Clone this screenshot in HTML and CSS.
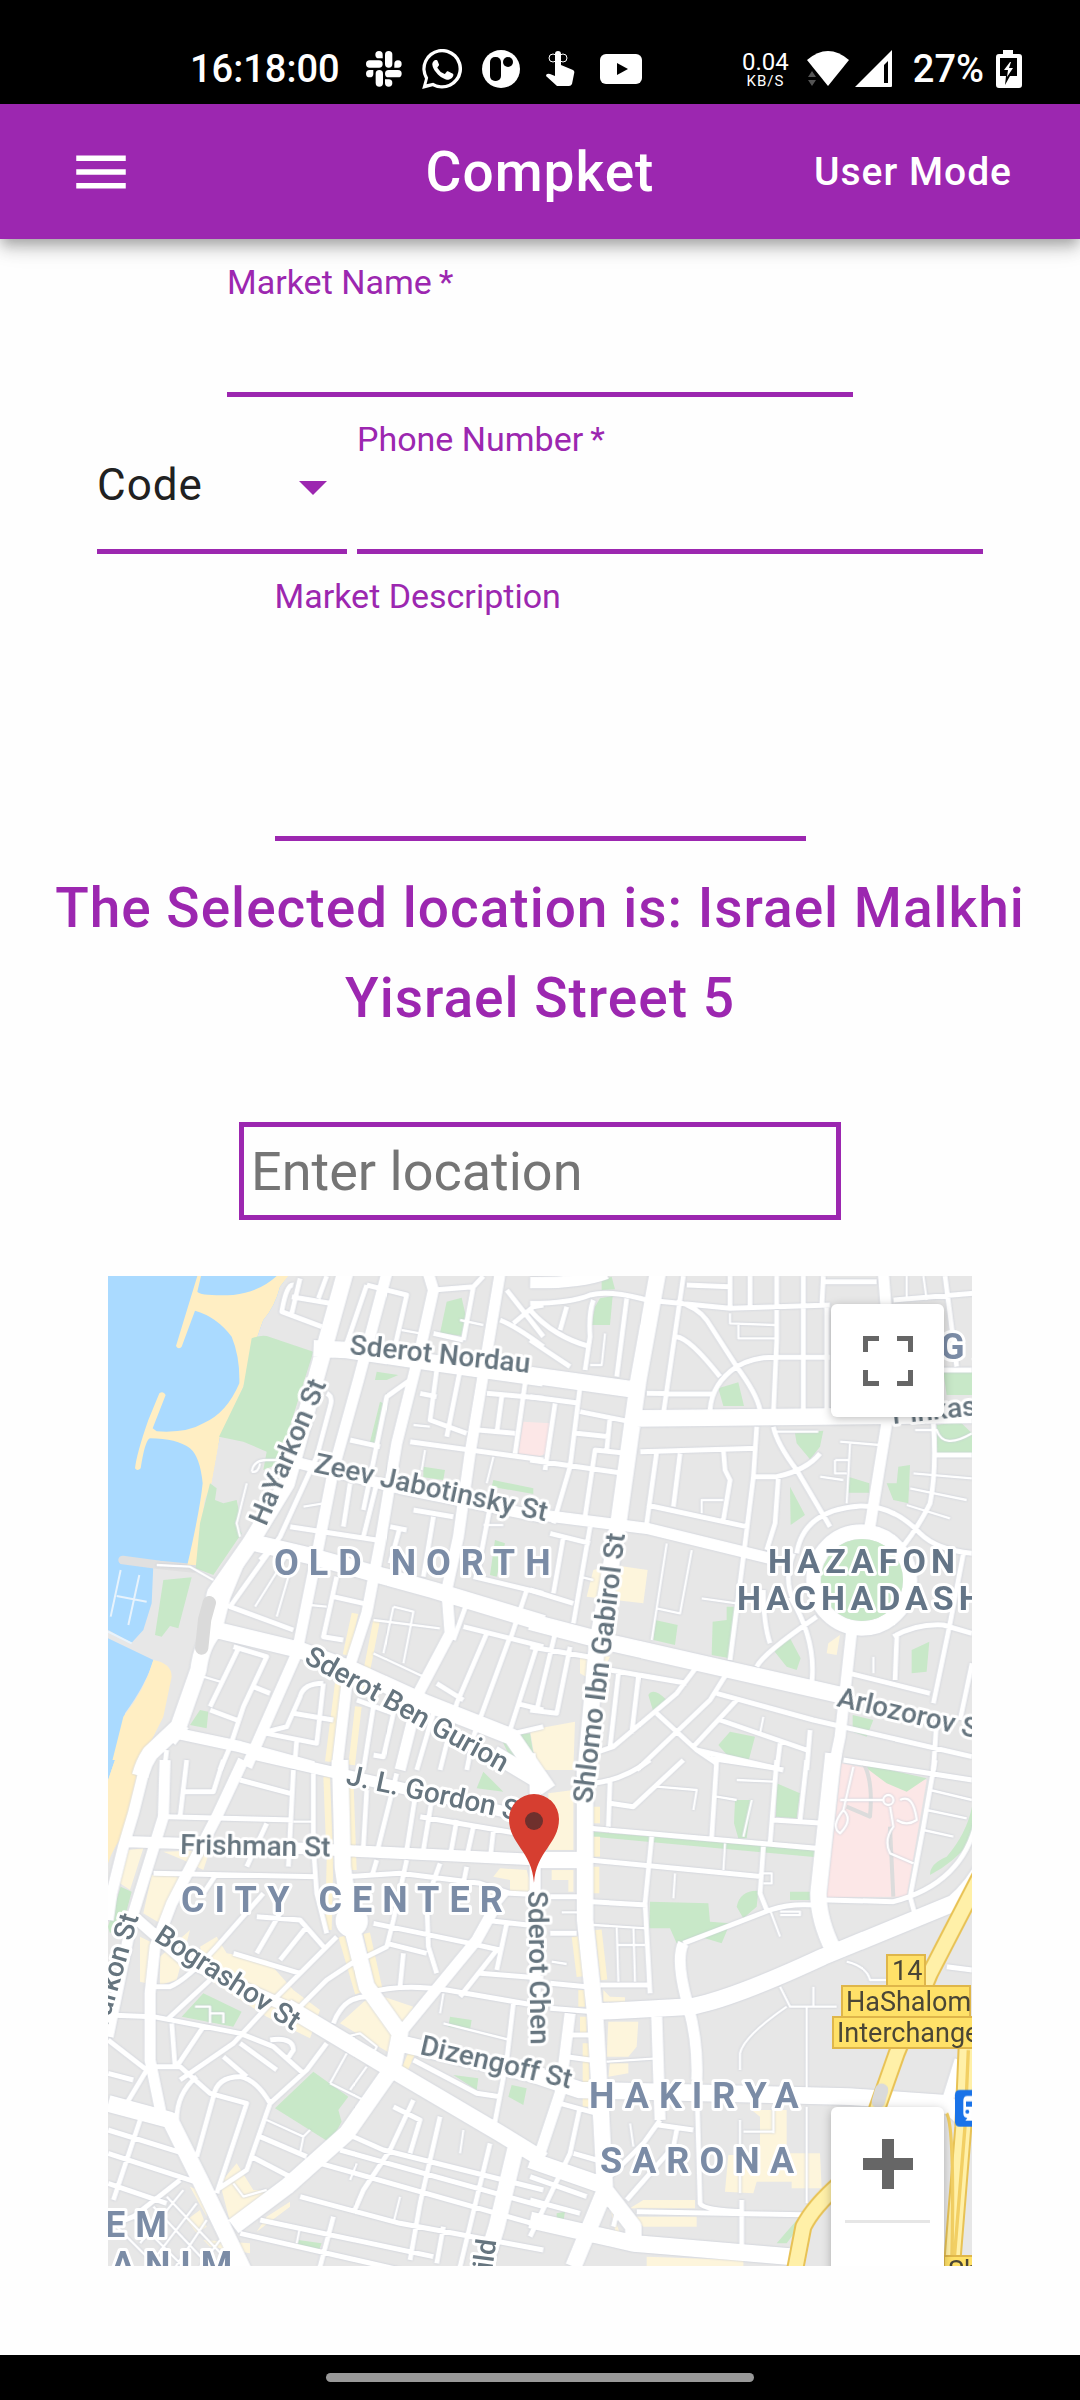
FILE: index.html
```html
<!DOCTYPE html>
<html lang="en">
<head>
    <meta charset="UTF-8">
    <meta name="viewport" content="width=device-width, initial-scale=1.0">
    <title>Compket</title>
    <link rel="stylesheet" href="styles.css">
</head>
<body>

    <!-- Phone status bar -->
    <div class="status-bar">
        <div class="status-group">
            <span class="clock">16:18:00</span>
            <svg width="36" height="36" viewBox="0 0 108 108" fill="#fff">
                <rect x="57" y="0" width="22" height="50" rx="11"/><path d="M50 22H39a11 11 0 1 1 11-11z"/>
                <rect x="0" y="28" width="50" height="22" rx="11"/><path d="M22 57v11a11 11 0 1 1-11-11z"/>
                <rect x="29" y="57" width="22" height="50" rx="11"/><path d="M57 85h11a11 11 0 1 1-11 11z"/>
                <rect x="57" y="57" width="50" height="22" rx="11"/><path d="M85 50V39a11 11 0 1 1 11 11z"/>
            </svg>
            <svg width="40" height="40" viewBox="0 0 24 24" fill="#fff">
                <path d="M.1 24l1.7-6.2a11.9 11.9 0 1 1 4.6 4.5zM6.7 20.2a9.9 9.9 0 1 0-3-3L2.7 21.200z"/>
                <path d="M17.500 14.400c-.3-.1-1.800-.9-2-1s-.5-.1-.7.2-.8 1-.9 1.200-.3.200-.6.100a8 8 0 0 1-4-3.500c-.3-.5.3-.5.9-1.600.1-.2 0-.4 0-.5L9.300 7.100c-.2-.6-.5-.5-.7-.5H8c-.2 0-.5.100-.8.400C6.400 7.800 6.100 8.700 6.200 9.500c.2 1.900 1.400 3.400 1.600 3.700 2.300 3.200 4.700 4.500 7.100 5.200 1.200.3 3.700-.9 3.900-2.700.2-1-.6-1-1.300-1.300z"/>
            </svg>
            <svg width="38" height="38" viewBox="0 0 38 38">
                <circle cx="19" cy="19" r="19" fill="#fff"/>
                <rect x="8" y="7" width="11" height="24" rx="5"/><circle cx="26" cy="12" r="5"/>
            </svg>
            <svg class="hand" width="30" height="36" viewBox="0 0 30 36" fill="#fff">
                <circle cx="8" cy="7" r="4" fill="none" stroke="#fff"/><circle cx="18" cy="7" r="4" fill="none" stroke="#fff"/>
                <path d="M10 3a3 3 0 0 1 6 0v11l12 5q2 1 1 4l-2 10q-1 2-3 2H12L1 25q0-3 4-2l5 2z"/>
            </svg>
            <svg width="42" height="30" viewBox="0 0 42 30">
                <rect width="42" height="30" rx="6" fill="#fff"/><path d="M17 9v12l11-6z"/>
            </svg>
        </div>
        <div class="status-group status-right">
            <span class="speed">0.04<small>KB/S</small></span>
            <svg width="42" height="36" viewBox="0 0 42 36">
                <path d="M0 9q21-18 42 0L21 35z" fill="#fff"/>
                <path d="M1 26l4-6 4 6zM1 29h8l-4 6z" fill="#555"/>
            </svg>
            <svg width="38" height="38" viewBox="0 0 38 38">
                <path d="M0 37L37 0v36q0 1-1 1z" fill="#fff"/><path d="M29 15l4-4v22h-4z"/>
            </svg>
            <span class="percent">27%</span>
            <svg width="26" height="38" viewBox="0 0 26 38">
                <path d="M7 0h10v4h6q3 0 3 3v28q0 3-3 3H3q-3 0-3-3V7q0-3 3-3h4z" fill="#fff"/>
                <path d="M4 8h17v18h-7l-5 9 1-9H4z"/><path d="M14 12l-6 8h4l-1 7 6-9h-4l2-6z" fill="#fff"/>
            </svg>
        </div>
    </div>

    <header class="app-bar">
        <button class="menu-button" aria-label="menu">
            <svg width="66" height="66" viewBox="0 0 24 24" fill="#fff"><path d="M3 18h18v-2H3v2zm0-5h18v-2H3v2zm0-7v2h18V6H3z"/></svg>
        </button>
        <h1>Compket</h1>
        <button class="mode-button">User Mode</button>
    </header>

    <main>
        <form>
            <div class="field">
                <label for="market-name">Market Name&thinsp;*</label>
                <input type="text" id="market-name">
            </div>

            <div class="field-group">
                <div class="field code">
                    <select id="code" aria-label="Code">
                        <option value="">Code</option>
                        <option value="03">03</option>
                        <option value="050">050</option>
                        <option value="052">052</option>
                        <option value="054">054</option>
                    </select>
                </div>
                <div class="field">
                    <label for="phone">Phone Number&thinsp;*</label>
                    <input type="text" id="phone">
                </div>
            </div>

            <div class="field description">
                <label for="description">Market Description</label>
                <textarea id="description"></textarea>
            </div>

            <h2>The Selected location is: Israel Malkhi Yisrael Street 5</h2>

            <input type="text" class="location" placeholder="Enter location" aria-label="Enter location">
        </form>

        <div class="map">
            <svg class="map-canvas" viewBox="0 0 864 990" preserveAspectRatio="xMidYMid slice">
                <!-- geometry is drawn at 3x, in four tiles -->
                <g transform="scale(.33333)">
                    <rect class="land" width="2592" height="2970"/>

                    <!-- areas, north west -->
                    <g transform="translate(-24 -18)">
                        <path class="sea" d="M24 18H560L455 270 310 640 285 885 160 885 155 1000 130 1080 95 1118 24 1080zM24 1105L160 1170Q140 1240 75 1330L65 1400 24 1530z"/>
                        <path class="pier" d="M68 870L180 885 280 895"/>
                        <path class="sand" d="M292 18H303L292 65Q300 78 400 75 480 65 530 18H565L540 50Q525 110 490 150 460 230 455 270L430 350 400 420 360 500 335 640 315 690 300 780 290 885H262Q300 720 308 640 300 560 270 535 230 505 150 505 135 510 122 595 112 605 105 595 110 550 145 450L178 370Q190 362 197 375L158 475 170 484Q260 490 310 460 380 430 418 340 420 260 395 200 350 140 285 122L245 230Q235 240 228 228zM160 1170Q215 1180 215 1220L190 1340 150 1420 120 1500H30L70 1340Q135 1260 160 1170z"/>
                        <path class="land" d="M565 18L540 50Q525 110 490 150 460 230 455 270L430 350 360 500 335 640 315 690 290 885 600 900V18z"/>
                        <path class="park" d="M455 205Q480 195 500 198L640 245 560 500 540 580 490 600 500 545 430 515 357 500 430 350zM330 640L350 655 345 690 370 700 410 690 418 730 405 760 425 790 340 915 287 895 300 760zM190 930L275 922 235 1075 210 1068 185 1100 165 1095zM1040 95L1085 83 1098 140 1085 197 1020 190zM970 590L1035 600 1030 630 970 622zM1180 630L1300 655V672L1175 650zM830 305L895 315 860 330H825zM840 395L850 400 825 520 810 515zM1200 1400L1290 1390 1308 1500 1235 1470zM300 1320L325 1325 320 1375 270 1365zM1185 810L1215 820 1190 920 1170 915z"/>
                        <path class="hospital" d="M1270 455L1350 460 1340 550 1320 558 1255 550z"/>
                        <path class="shops-line" d="M765 1030L738 1155M830 1050L785 1280M720 1200L685 1475M775 1310L755 1485"/>
                        <path class="dock" d="M62 900L32 1040M118 915L85 1065M50 978L140 995M24 1085L95 1120"/>
                    </g>
                    <!-- areas, north east -->
                    <g transform="translate(1266 -18)">
                        <path class="park" d="M215 30L245 20 255 58 215 60zM210 85L248 78 240 165H185L195 110zM565 355L625 337 642 408H580zM795 490L880 482 870 530 840 568 800 520zM780 650L825 735 782 765zM955 620L1018 640V668H952zM1105 590L1140 585 1135 700 1090 690 1070 640 1100 640zM1240 305H1326V375H1250zM1220 465L1290 455 1326 490V550H1220zM375 1050L443 1065 435 1125 370 1110zM548 1055L590 1050V1010H613L600 1165 545 1155zM730 1140L780 1105 812 1165 800 1200 770 1190zM355 1275Q370 1250 410 1290L370 1325zM565 1425L600 1385 675 1400 655 1475 600 1465zM1145 1140L1198 1115 1190 1205 1145 1210zM968 1335L1030 1350 1010 1400 968 1385z"/>
                        <path class="shops" d="M250 885L353 900 340 1000 170 980 190 900zM0 1380L135 1355 130 1500H20zM895 1120L930 1095 920 1155 890 1150zM150 1150L240 1160 200 1240 150 1210z"/>
                    </g>
                    <!-- areas, south west -->
                    <g transform="translate(-24 1452)">
                        <path class="sea" d="M24 0H45L24 60z"/>
                        <path class="sand" d="M45 0H120L75 220Q40 260 24 310V60z"/>
                        <path class="park" d="M62 380L95 395 75 470 30 520 24 500zM245 770L310 700 425 755 400 800zM525 1045L640 935 745 1010 715 1050 725 1085 690 1148zM1050 770L1115 780 1110 810 1045 800zM1150 35L1210 95 1130 85zM1250 0H1310V30zM1060 945L1135 955 1130 990zM1235 975L1280 985 1270 1035 1225 1010zM595 1440L665 1450 655 1475 592 1460z"/>
                        <path class="shops" d="M155 345L250 350 180 490 130 460zM85 270L130 265 90 390 60 370zM120 530L160 550 140 670 120 665zM180 590L270 510 230 660 180 675zM300 560L350 530 380 580 500 600 580 690 660 750 630 835 500 770 330 660zM720 790L820 700 940 740 870 880zM360 1270L410 1210 460 1290 520 1290 390 1385zM270 1280L320 1300V1370zM500 1370L570 1325V1340L470 1415zM260 1380L300 1350 320 1400 290 1420zM1180 350L1200 325 1280 330 1300 400H1230V360zM190 275L330 270 310 330 250 300zM310 1440L450 1450V1480L330 1460z"/>
                        <path class="shops-line" d="M680 50L690 300 685 510M750 50L760 330M725 530L775 700M800 520L838 690M940 870L915 925"/>
                    </g>
                    <!-- areas, south east -->
                    <g transform="translate(1266 1452)">
                        <path class="hospital" d="M935 10L1190 60 1130 410 890 412z"/>
                        <path class="park" d="M360 425L535 430 540 485 600 490 575 550 510 530 440 550 420 505H358zM620 440Q630 390 685 392L680 440 640 475zM190 215L860 272V292L190 230zM780 395H840V420H780zM615 120H665L650 235H625L612 190zM740 70L810 100 800 175 738 170zM990 10L1190 55 1130 95 1070 70zM1326 140V240Q1270 310 1200 345 1200 310 1250 290 1310 220 1326 140zM80 1360L105 1355 100 1385H80zM805 1375L830 1370 770 1450H740z"/>
                        <path class="shops" d="M235 785H325L320 860 295 890H230zM240 910H295V940L235 950zM65 330H130V395H115V360H65zM55 100L130 90V270H55zM665 1050H770V1180H870L875 1285H785V1265H680L670 1300 585 1295 595 1185H690V1070zM340 1320H495V1345H300zM310 1370H500V1400H340zM350 1490L640 1500V1530H350zM220 690L240 710 285 712V725H220zM240 1340L270 1420 260 1430z"/>
                        <path class="shops-line" d="M200 140V190M200 230V290M198 320V400M205 510L222 660M135 530L150 650M155 690V740M160 770V830M168 850V1040"/>
                        <path class="hospital-path" d="M1000 10Q1030 60 1020 170L950 140M1080 200L1090 410"/>
                    </g>

                    <g class="roads">
                        <g transform="translate(-24 -18)">
                            <path class="major" d="M735 10L560 640 450 820 345 970Q335 1000 345 1080 305 1120 295 1200L235 1370 150 1450Q130 1480 120 1518M640 235L740 240 1000 278 1330 325M470 820L640 860 1000 960 1330 1060M350 1080L600 1140 760 1200 980 1300 1235 1400 1345 1560"/>
                            <path class="medium" d="M560 570L900 655 1330 742M860 10L775 330 700 600 655 830 590 1150 440 1490M985 10L1000 60 960 240 890 520 840 820 800 1030 745 1200 710 1500M1200 10L1160 250 1110 550 1075 800 1040 960 1050 1090 960 1260 900 1500M230 1390L420 1430 640 1490M420 870L375 980 350 1080"/>
                            <path class="minor" d="M665 170L545 125Q560 40 580 45M600 25L575 130M575 80L690 100M680 18L655 85M800 45L740 220M800 45L920 75 880 250M1000 60L1120 50 1150 18M1120 50L1090 210M1000 190L1090 210M1220 60L1330 200M1200 150Q1250 170 1330 230M1240 160L1300 110 1330 105M1080 300L1040 500M1010 300L990 450 1100 490M960 370L1010 380M930 330L860 380 790 720M930 515L1330 570M1160 370L1330 385M1205 380L1190 490M1275 340L1245 550M1135 480L1245 490M750 510L840 530M680 370Q700 380 690 410L650 560 540 800 390 1010 580 1080M750 640L730 770M570 770L830 810M830 640L790 800M900 770L870 880M940 720L1060 740M1000 740L970 920M870 770L920 780M1170 710L1130 920M1120 920L1330 970M500 850L480 870M640 900L600 1100M710 920L670 1100 730 1110M700 980L790 1000M1100 1000L1060 1110M1090 1070L1330 1130M1160 1090L1070 1300 1020 1500M1230 1100L1120 1400 1100 1500M1280 960L1230 1110M1310 1130L1230 1380M1250 1300L1330 1320M1010 1240L1090 1290M415 1135L330 1310M400 1130L500 1160 430 1310 390 1430M330 1320L410 1350M460 1250L510 1270M670 1240Q610 1240 600 1280L560 1370 480 1390M580 1330L700 1350M670 1240L650 1420 500 1390M590 1410L585 1470M770 1290L880 1330 850 1460 820 1455M820 1310L790 1500M1000 1330L950 1500M220 1420L260 1370M390 1430L360 1500M200 1440L190 1520M1200 1400L1330 1370"/>
                            <path class="lane" d="M440 640L410 760 420 800M455 605Q460 570 500 570H560M455 605Q475 610 480 580M1080 150L1150 165M565 850L465 1010M565 920L530 1040M630 1005L680 1010M820 1050L1020 1075M880 1010L850 1150M880 1010L940 1025 910 1180M820 1150L970 1220M310 1220L360 1235M905 180L960 190M940 465L990 470M610 710L670 700M1150 765H1210M170 885L270 890 340 930M1180 560L1160 640M975 540L965 600"/>
                        </g>
                        <g transform="translate(1266 -18)">
                            <path class="major" d="M0 315L300 357M320 445L1326 435M0 1055L250 1120 600 1200 930 1275M383 10L325 330 265 760 200 1130 165 1520"/>
                            <path class="medium" d="M0 38Q150 40 230 10M30 735L350 775 740 870M1060 10L1075 200 1070 460 1018 780M965 1080L930 1400 905 1520"/>
                            <circle class="roundabout" cx="995" cy="930" r="145"/>
                            <path class="minor" d="M0 100Q120 100 180 75 240 60 350 90L600 115 900 105M290 85L260 320M190 90Q175 130 180 200L165 300M0 120Q70 200 180 230M0 210L120 290M110 110L90 180M460 18L400 430M440 95Q500 110 530 150L620 290Q680 370 690 420M440 200Q480 205 570 320M600 18V110M660 18V110M740 18V210L730 430M820 18V430M880 18L875 110M890 110V430M470 45L600 50M885 35H1040M540 420Q545 340 620 290 670 260 740 262H900M350 370L545 372M1090 90L1330 70M1245 18L1280 290M1235 300H1326M0 380L150 400M150 350L120 590 70 760M150 425L300 455M240 440L230 540M140 490L240 500M75 400L45 600M290 550L195 540 165 740M0 570L280 610M330 545L680 535M380 545L350 760M450 550L430 710M350 705L650 770M580 540L585 600 600 630 580 750M680 470L670 620 640 860 600 1170M675 620H740Q830 600 870 550M745 620L735 760 710 840M730 470Q740 520 800 600L900 770M1210 460Q1220 600 1200 700 1160 780 1110 840M1215 555H1326M1300 850L1260 1060 1210 1300M60 790L180 820M180 770L130 1060M100 800L70 970M0 960L130 1000M0 1130L200 1165M75 1090L20 1320M0 1320L80 1330 120 1130M240 1200L470 1240M265 1210L240 1430M325 1220L305 1390M500 1190L440 1270 250 1430 190 1450M590 1210L540 1290 320 1500M380 1330L500 1440 560 1480M560 1270L850 1350 1326 1460M620 1290L490 1430M570 1350L830 1440M500 1440L760 1500M840 1380L830 1500M750 1420L740 1500M700 960Q700 1060 720 1120M680 1190Q700 1150 860 1040M780 980Q860 1110 845 1240M960 1210L1200 1270M1100 1100L1095 1230M1090 1100Q1160 1060 1240 1065L1326 1090M1326 1180L1290 1350M1220 1350L1210 1500M800 850Q820 720 990 708 1090 705 1170 790 1220 840 1326 850M790 850Q760 930 790 990"/>
                            <path class="lane" d="M225 190L215 285H180M600 130V160L735 165M625 165V205H735M1130 18V90M1180 18L1190 90M515 730V690H580M960 520L950 700M930 515L1050 525M1155 480H1220Q1240 540 1326 490M1150 610L1326 625M1140 655L1310 690M1130 705L1260 745M150 920L190 930M410 820L365 1110M485 840L450 1030 380 1015M515 985L620 1000M700 1340L690 1390M1030 1160V1210M915 570H960M915 570V610H950M870 620L940 630M735 485H865"/>
                        </g>
                        <g transform="translate(-24 1452)">
                            <path class="major" d="M1180 -20L1330 70M720 0L728 320 755 500 800 680 900 820 880 920 740 1120 560 1280 400 1400M560 740L860 920 1200 1120 1330 1200M24 1030L210 1080 300 1260 430 1530M1250 1150L1190 1400 1150 1530M900 850L1330 950"/>
                            <path class="medium" d="M145 -20L100 160 70 260 35 400 24 480M195 0L190 170 100 460 24 830M80 245L400 255 700 270 1330 300M90 460L250 600 560 740M430 0L350 170 215 430 165 560 150 700 150 900 185 1070M450 -20L800 60 1320 180M900 820L1130 540 1180 450"/>
                            <circle class="roundabout small" cx="755" cy="483" r="32"/>
                            <path class="minor" d="M260 0L240 170M250 95H340L370 0M200 170L580 180M420 60L570 100M580 30L565 320M640 40V260L650 400 680 520M160 340L650 350M350 340L310 400M500 190L440 320M800 90L790 260M890 40L830 280M950 80L920 270M1000 90L970 270M1070 180L1050 290M1120 200L1100 290M1180 210L1170 300M960 170L1250 220M740 350L900 340 1140 370 1230 400 1330 405M830 300L815 350M920 300L880 480 860 560 780 600M1020 310L980 420 985 560 1010 640M1100 320L1080 420M820 490L1110 550 1200 570M1150 480L1330 500M1180 450L1220 400M860 550L980 580M910 580L900 680M800 700Q900 670 1040 690L1330 740M1080 710L1190 570M1140 640L1330 655M1220 490L1190 630M1240 730L1220 900 1180 1110M470 470L600 480 670 560M540 460L470 580M620 500L540 600M400 580L600 640M710 530L520 720 400 850 240 960M770 600L680 660 600 740M700 790Q730 710 800 710M160 680H210Q260 660 350 560L490 400M330 660L200 780M24 765L160 770 420 820 520 860 610 940M215 790L225 920M310 800L230 920M24 840L140 930M24 940L100 960M140 930L80 1030M160 920H240L330 1000 440 1030 350 1300M290 950Q230 1000 230 1080M340 1010Q350 950 420 950 470 960 510 1030L620 930 680 850M370 890L440 950M420 850L530 930M510 840Q580 830 580 870L560 900M510 1030L440 1230 350 1290M340 1010L290 1190M480 1130L620 1190M455 1190L570 1250M760 1130L850 1170 1330 1290M720 1170L1330 1340M660 1210L1330 1400M600 1310L900 1390 1330 1470M480 1380L1000 1490M420 1420L900 1530M940 1020L870 1170 790 1290 760 1360M880 1040L960 1080 930 1180M1020 1070L960 1330 930 1500M1170 1150L1080 1520M700 1370L660 1520M1030 1400L1010 1510M24 1110L250 1180M24 1180L300 1270M24 1270L200 1330M120 1080L40 1320M240 1260L100 1370 24 1400M940 900L1130 1000 1200 1010"/>
                            <path class="lane" d="M1030 700L1020 760M1030 790L1230 840M690 970L790 1020M740 880L690 970M800 920L750 990M500 1080L610 1130 630 1110M610 1130L600 1180M600 1400L590 1450M900 1310L880 1390M1090 1110L1080 1180M200 1310L400 1520M160 1340L330 1520M100 1370L260 1530M50 1400L180 1530M250 1290L120 1450M290 1330L160 1500M320 1380L220 1530M360 1440L300 1520M285 740H330V790M330 760H370V790M400 1270L430 1310 500 1290M740 830L780 820 830 860 820 880M580 185H640M770 1210L750 1260"/>
                        </g>
                        <g transform="translate(1266 1452)">
                            <path class="major" d="M165 30V480L195 760 215 1100 225 1290 310 1400 310 1450 780 1490M200 755L480 740Q600 720 880 590L1270 430Q1330 380 1370 300M910 -20L865 400Q865 480 910 570M0 300H170M0 940L150 990 960 1010 1250 1030 1326 1100M0 1200L230 1280M225 1290L130 1520M0 1380L310 1450"/>
                            <path class="medium" d="M380 770L390 1080M0 -20V60M15 60V850M120 760L90 1000 30 1180M460 550Q435 600 475 740 505 850 500 960M1290 900L1240 1060"/>
                            <path class="minor" d="M240 60L235 200M190 70Q280 60 360 0M240 130L310 140 460 0M560 0L545 230M540 -5L740 25M740 0L720 250M830 0L810 180M730 180L880 190M180 205L860 265M365 230L345 430 360 700M700 260L690 400 710 450M180 300L700 350M185 425L350 435M460 550L720 450Q780 430 850 435M500 960L510 1330Q520 1350 640 1355M210 675H360M385 1095L490 1110M440 1110L430 1160 290 1320M890 420L1090 425Q1300 370 1340 180M1215 0L1180 200 1140 410 1155 465M940 0L1326 60M60 410H140M60 520H140M60 670L170 680M60 745L190 755M115 825H180M110 890L180 900M90 1030L200 1060M150 1040L120 1180 0 1430M130 1180L200 1200M0 1250L170 1310M0 1320L150 1360M320 1355L860 1365M635 1320V1480M270 1320L250 1400M390 1080L340 1150 230 1260M1326 630L1250 620"/>
                            <path class="lane" d="M380 80L500 90 490 150M585 250L580 330M435 340L430 415M230 905L380 895M190 495L350 505M260 500L265 665M310 500L315 665M260 555H345M1200 90L1326 120M1190 150L1310 175M1180 210L1270 230M750 680L780 740H920M770 740Q640 830 630 880V930M830 740V1000M850 680V740M950 605Q1010 620 1020 660H1070M630 1080V1300M830 1040V1330M730 1040V1120M640 1115H730M720 450L750 530M750 455H810V465H750M700 340H725V370H700M665 120L640 230M560 110L620 120M930 120H1060M940 150Q900 200 930 220 970 180 940 150L970 20M1060 120a15 15 0 1 0 30 0a15 15 0 1 0-30 0M1080 140L1090 200Q1060 240 1080 280L1150 310M1110 120Q1150 100 1160 180 1130 200 1100 180M300 1090L310 1160M95 457H140M65 605L110 612M620 60L730 65"/>
                        </g>
                    </g>

                    <!-- Ayalon highway -->
                    <g transform="translate(1266 1452)">
                        <path class="highway-edge" d="M1350 350L1200 640 1100 880 1040 1050M930 1270Q850 1340 820 1400L795 1530M1310 860L1300 1100 1265 1530"/>
                        <path class="highway" d="M1350 350L1200 640 1100 880 1040 1050M930 1270Q850 1340 820 1400L795 1530M1310 860L1300 1100 1265 1530"/>
                        <path class="highway-line" d="M1315 870L1305 1100 1270 1530M1250 1060Q1275 1100 1265 1530"/>
                        <path class="tunnel" d="M1055 990L1045 1025"/>
                        <path class="stop" d="M1290 990H1340V1100H1290Q1275 1100 1275 1085V1005Q1275 990 1290 990z"/>
                        <path class="stop-icon" d="M1326 1008H1312Q1300 1008 1300 1022V1060Q1300 1072 1312 1074L1306 1082H1326zM1308 1024H1326V1040H1308zM1318 1055a6 6 0 1 1-12 0a6 6 0 1 1 12 0z"/>
                    </g>
                    <path class="tunnel" d="M304 980L290 1030 281 1116"/>
                </g>

                <circle class="park" cx="754" cy="304" r="41"/>

                <g class="street">
                    <text transform="translate(241 78) rotate(6)">Sderot Nordau</text>
                    <text transform="translate(158 251) rotate(-67)">HaYarkon St</text>
                    <text transform="translate(205 196) rotate(12)">Zeev Jabotinsky St</text>
                    <text transform="translate(195 386) rotate(29)">Sderot Ben Gurion</text>
                    <text transform="translate(484 528) rotate(-83)">Shlomo Ibn Gabirol St</text>
                    <text transform="translate(237 508) rotate(12)">J. L. Gordon St</text>
                    <text transform="translate(72 578) rotate(1)">Frishman St</text>
                    <text transform="translate(45 664) rotate(33)">Bograshov St</text>
                    <text transform="translate(-12 790) rotate(-74)">HaYarkon St</text>
                    <text transform="translate(420 615) rotate(89)">Sderot Chen</text>
                    <text transform="translate(311 778) rotate(13)">Dizengoff St</text>
                    <text transform="translate(728 430) rotate(13)">Arlozorov St</text>
                    <text transform="translate(785 148) rotate(-6)">Pinkas St</text>
                    <text transform="translate(370 1096) rotate(-82)">Rothschild</text>
                </g>
                <g class="district">
                    <text x="166" y="299">OLD NORTH</text>
                    <text x="73" y="636">CITY CENTER</text>
                    <text x="481" y="832">HAKIRYA</text>
                    <text x="492" y="897">SARONA</text>
                    <text x="832" y="83">GAN</text>
                    <text x="-3" y="961">EM</text>
                    <text x="-33" y="1001">HANIM</text>
                </g>
                <g class="district dark">
                    <text x="660" y="297">HAZAFON</text>
                    <text x="629" y="334">HACHADASHA</text>
                </g>
                <g class="exit">
                    <rect x="779" y="679" width="38" height="31"/><rect x="734" y="710" width="128" height="31"/><rect x="725" y="741" width="144" height="31"/><rect x="836" y="980" width="60" height="31"/>
                    <text x="784" y="704">14</text><text x="738" y="735">HaShalom</text><text x="729" y="766">Interchange</text><text x="840" y="1004">Shalom</text>
                </g>

                <!-- Marker -->
                <path d="M426 607C424 575 401 568 401 543a25 25 0 0 1 50 0C451 568 428 575 426 607z" fill="#d63e30"/>
                <circle cx="426" cy="545" r="9" fill="#6f302d"/>
            </svg>

            <button class="map-button fullscreen" aria-label="Toggle fullscreen">
                <svg width="50" height="50" viewBox="0 0 50 50" fill="#666"><path d="M0 0h16v5H5v11H0zM34 0h16v16h-5V5H34zM0 34h5v11h11v5H0zM45 34h5v16H34v-5h11z"/></svg>
            </button>
            <div class="zoom-control">
                <button class="map-button" aria-label="Zoom in">
                    <svg width="50" height="50" viewBox="0 0 50 50" fill="#666"><path d="M19 0h12v19h19v12H31v19H19V31H0V19h19z"/></svg>
                </button>
                <hr>
                <button class="map-button" aria-label="Zoom out">
                    <svg width="50" height="50" viewBox="0 0 50 50" fill="#666"><path d="M0 19h50v12H0z"/></svg>
                </button>
            </div>
        </div>
    </main>

    <div class="nav-bar"><span></span></div>

</body>
</html>
```

FILE: styles.css
```css
* {
    margin: 0;
    padding: 0;
    box-sizing: border-box;
}

body {
    font-family: Roboto, 'Liberation Sans', sans-serif;
    background-color: #fefefe;
    color: #9c27b0;
    min-height: 100vh;
    display: flex;
    flex-direction: column;
}

button {
    background: none;
    border: none;
    font-family: inherit;
    cursor: pointer;
}

/* Status bar */
.status-bar {
    background-color: #000;
    color: #fff;
    height: 104px;
    padding: 34px 58px 0 190px;
    display: flex;
    justify-content: space-between;
}

.status-group {
    display: flex;
    align-items: center;
    height: 70px;
    gap: 20px;
}

.clock,
.percent {
    font-size: 38px;
    font-weight: 500;
}

.clock {
    margin-right: 6px;
}

.hand {
    margin: 0 5px;
}

.status-right {
    gap: 6px;
}

.speed {
    font-size: 24px;
    line-height: 24px;
    text-align: center;
    margin-right: 12px;
}

.speed small {
    display: block;
    font-size: 15px;
    line-height: 14px;
    letter-spacing: 1px;
}

.percent {
    margin: 0 6px 0 14px;
}

/* App bar */
.app-bar {
    background-color: #9c27b0;
    color: #fff;
    height: 135px;
    padding: 0 68px;
    display: grid;
    grid-template-columns: 1fr auto 1fr;
    align-items: center;
    box-shadow: 0 6px 11px -3px rgba(0, 0, 0, 0.2), 0 11px 14px rgba(0, 0, 0, 0.14), 0 3px 28px rgba(0, 0, 0, 0.12);
}

.menu-button {
    height: 66px;
    justify-self: start;
}

h1 {
    font-size: 55px;
    font-weight: 500;
    letter-spacing: 1px;
}

.mode-button {
    color: #fff;
    font-size: 39px;
    font-weight: 500;
    letter-spacing: 1px;
    justify-self: end;
}

/* Form */
main {
    flex: 1;
    padding-bottom: 88px;
}

form {
    display: flex;
    flex-direction: column;
    align-items: center;
    gap: 20px;
    padding-top: 21px;
}

.field {
    width: 626px;
    max-width: 100%;
}

.field-group {
    display: flex;
    align-items: flex-end;
    gap: 10px;
    max-width: 100%;
}

.field label {
    display: block;
    font-size: 34px;
    line-height: 44px;
}

.field input,
.field select,
.field textarea {
    display: block;
    width: 100%;
    height: 93px;
    border: none;
    border-bottom: 5px solid #9c27b0;
    background: none;
    color: #212121;
    font-family: inherit;
    font-size: 44px;
    outline: none;
    resize: none;
    appearance: none;
}

.field.code {
    position: relative;
    width: 250px;
}

.field.code select {
    height: 137px;
    padding-top: 3px;
    letter-spacing: 1px;
}

.code::after {
    content: "";
    position: absolute;
    right: 20px;
    top: 64px;
    border: 14px solid transparent;
    border-top-color: #9c27b0;
    border-bottom: none;
}

.field.description {
    width: 531px;
}

.field.description textarea {
    height: 223px;
}

h2 {
    max-width: 990px;
    padding-top: 2px;
    font-size: 55px;
    font-weight: 500;
    line-height: 90px;
    letter-spacing: 1px;
    text-align: center;
}

.location {
    width: 602px;
    max-width: 100%;
    height: 98px;
    margin-top: 59px;
    padding: 0 7px;
    border: 5px solid #9c27b0;
    background: none;
    font-family: inherit;
    font-size: 54px;
}

.location::placeholder {
    color: #757575;
}

/* Map */
.map {
    position: relative;
    width: 80%;
    aspect-ratio: 864 / 990;
    margin: 56px auto 0;
    overflow: hidden;
}

.map-canvas {
    display: block;
    width: 100%;
    height: 100%;
}

.land { fill: #e7e7e7; }
.sea { fill: #aadaff; }
.sand { fill: #ffeec3; }
.park { fill: #c8e8c8; }
.shops { fill: #fdf5dc; }
.hospital { fill: #fce7e7; }
.stop { fill: #1a73e8; }

.stop-icon {
    fill: #fff;
    fill-rule: evenodd;
}

.pier,
.dock,
.tunnel,
.shops-line,
.hospital-path,
.roads path,
.roads circle,
.highway,
.highway-edge,
.highway-line {
    fill: none;
    stroke-linejoin: round;
}

.pier { stroke: #e0e0e0; stroke-width: 26; stroke-linecap: round; }
.dock { stroke: #e8f3fc; stroke-width: 6; }
.tunnel { stroke: #dadada; stroke-width: 40; stroke-linecap: round; }
.shops-line { stroke: #fdf3d2; stroke-width: 20; }
.hospital-path { stroke: #dcdcdc; stroke-width: 12; }

.roads {
    stroke: #fff;
    filter: drop-shadow(0 0 3px #c3c8d4);
}

.roads .major { stroke-width: 50; }
.roads .medium { stroke-width: 34; }
.roads .minor { stroke-width: 15; }
.roads .lane { stroke-width: 7; }
.roads .roundabout { stroke-width: 44; }
.roads .roundabout.small { stroke-width: 34; }

.highway-edge { stroke: #e8c255; stroke-width: 54; }
.highway { stroke: #fff0a8; stroke-width: 42; }
.highway-line { stroke: #f2cf63; stroke-width: 10; }

.map-canvas text {
    paint-order: stroke;
    stroke: #fff;
    stroke-width: 6px;
    stroke-linejoin: round;
}

.street {
    font-size: 28px;
    font-weight: 500;
    fill: #66757f;
}

.district {
    font-size: 36px;
    font-weight: 700;
    letter-spacing: 10px;
    fill: #7b8ca6;
}

.district.dark {
    font-size: 34px;
    letter-spacing: 5px;
    fill: #647587;
}

.exit rect {
    fill: #ffe168;
    stroke: #dfb64a;
    stroke-width: 2px;
}

.map-canvas .exit text {
    font-size: 27px;
    fill: #4a4636;
    stroke: none;
}

.map-button {
    display: flex;
    align-items: center;
    justify-content: center;
    width: 113px;
    height: 113px;
}

.fullscreen,
.zoom-control {
    position: absolute;
    right: 28px;
    background-color: #fff;
    border-radius: 6px;
    box-shadow: 0 2px 10px rgba(0, 0, 0, 0.25);
}

.fullscreen {
    top: 28px;
}

.zoom-control {
    bottom: -70px;
}

.zoom-control hr {
    height: 3px;
    margin: 0 14px;
    border: none;
    background-color: #e6e6e6;
}

/* Gesture bar */
.nav-bar {
    background-color: #000;
    height: 45px;
    display: flex;
    align-items: center;
    justify-content: center;
}

.nav-bar span {
    width: 428px;
    height: 9px;
    border-radius: 5px;
    background-color: #999;
}
```
